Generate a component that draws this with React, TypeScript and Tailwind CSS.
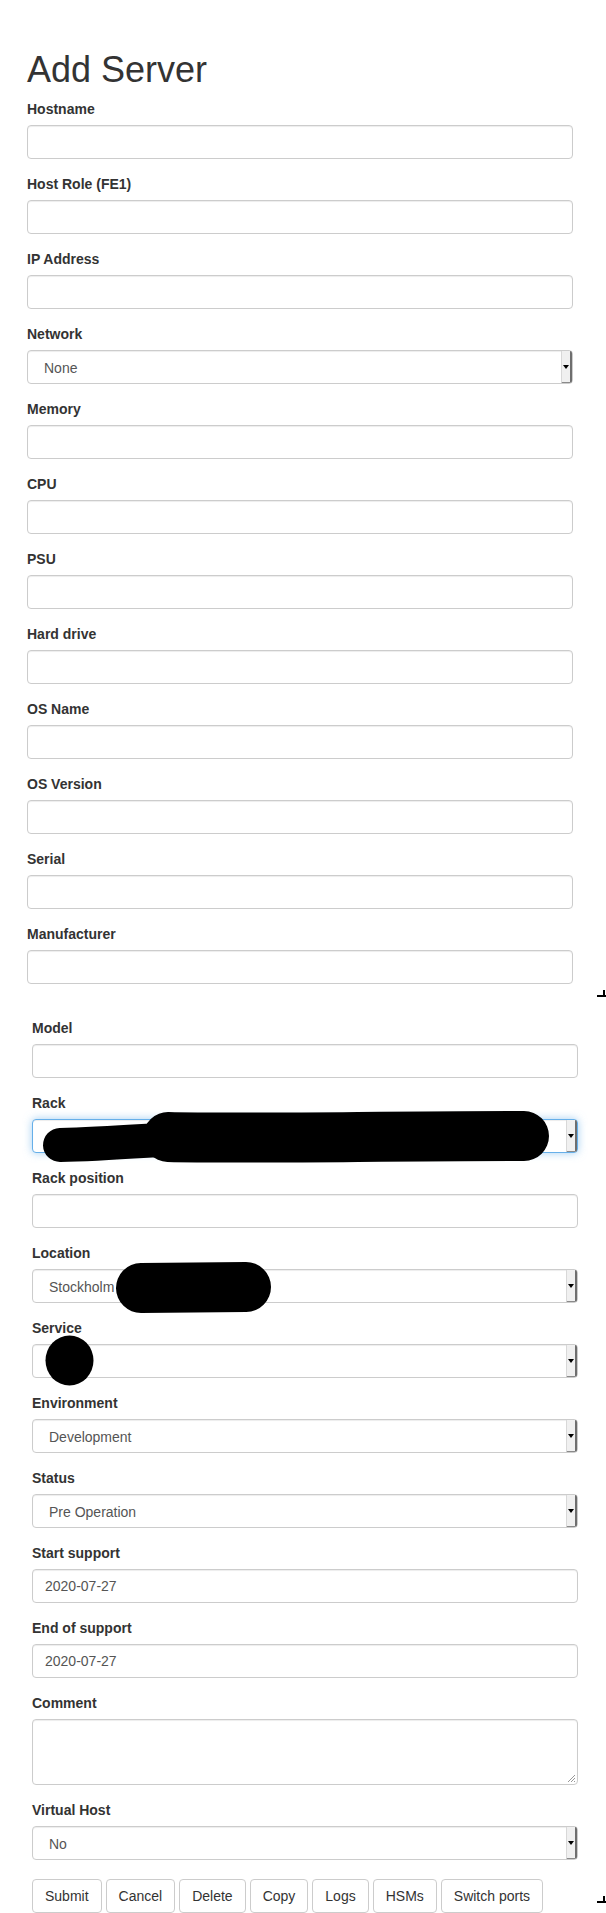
import React from "react";

const font = { fontFamily: '"Liberation Sans", Arial, sans-serif' };

function Label({ children }: { children: React.ReactNode }) {
  return (
    <label className="block text-[14px] leading-[21px] font-bold text-[#333] mb-[5px]">
      {children}
    </label>
  );
}

function TextInput({ value }: { value?: string }) {
  return (
    <div className="h-[34px] w-full rounded-[4px] border border-[#ccc] bg-white px-[12px] flex items-center text-[14px] text-[#555] shadow-[inset_0_1px_1px_rgba(0,0,0,0.075)]">
      {value}
    </div>
  );
}

function Select({ value, focus }: { value?: string; focus?: boolean }) {
  return (
    <div
      className={
        focus
          ? "h-[34px] w-full rounded-[4px] border border-[#66afe9] bg-white flex items-stretch text-[14px] text-[#555] shadow-[inset_0_1px_1px_rgba(0,0,0,0.075),0_0_8px_rgba(102,175,233,0.6)]"
          : "h-[34px] w-full rounded-[4px] border border-[#ccc] bg-white flex items-stretch text-[14px] text-[#555] shadow-[inset_0_1px_1px_rgba(0,0,0,0.075)]"
      }
    >
      <div className="flex-1 flex items-center pl-[16px] pt-[2px]">{value}</div>
      <div className="w-[11px] bg-[#f0f0f0] border-l border-[#d8d8d8] border-r-2 border-r-[#6e6e6e] border-b border-b-[#8a8a8a] flex items-center justify-center rounded-tr-[2px] rounded-br-[2px]">
        <div className="w-0 h-0 border-l-[3px] border-r-[3px] border-t-[4px] border-l-transparent border-r-transparent border-t-black" />
      </div>
    </div>
  );
}

function Group({ label, children }: { label: string; children: React.ReactNode }) {
  return (
    <div className="mb-[15px]">
      <Label>{label}</Label>
      {children}
    </div>
  );
}

function Btn({ children }: { children: React.ReactNode }) {
  return (
    <div className="h-[34px] px-[12px] rounded-[4px] border border-[#ccc] bg-white text-[14px] text-[#333] flex items-center">
      {children}
    </div>
  );
}

function Mark({ top }: { top: number }) {
  return (
    <div className="absolute left-[597px] w-[9px] h-[7px]" style={{ top }}>
      <div className="absolute right-[1px] top-0 w-[2px] h-[7px] bg-black" />
      <div className="absolute left-0 bottom-0 w-[9px] h-[2px] bg-black" />
    </div>
  );
}

export default function App() {
  return (
    <div className="relative w-[606px] h-[1913px] bg-white overflow-hidden" style={font}>
      <div className="ml-[27px] w-[546px] pt-[50px]">
        <h1 className="text-[36px] leading-[40px] text-[#333] font-normal mb-[9px]">Add Server</h1>
        <Group label="Hostname"><TextInput /></Group>
        <Group label="Host Role (FE1)"><TextInput /></Group>
        <Group label="IP Address"><TextInput /></Group>
        <Group label="Network"><Select value="None" /></Group>
        <Group label="Memory"><TextInput /></Group>
        <Group label="CPU"><TextInput /></Group>
        <Group label="PSU"><TextInput /></Group>
        <Group label="Hard drive"><TextInput /></Group>
        <Group label="OS Name"><TextInput /></Group>
        <Group label="OS Version"><TextInput /></Group>
        <Group label="Serial"><TextInput /></Group>
        <Group label="Manufacturer"><TextInput /></Group>
      </div>
      <div className="ml-[32px] w-[546px] pt-[19px]">
        <Group label="Model"><TextInput /></Group>
        <Group label="Rack"><Select focus /></Group>
        <Group label="Rack position"><TextInput /></Group>
        <Group label="Location"><Select value="Stockholm" /></Group>
        <Group label="Service"><Select /></Group>
        <Group label="Environment"><Select value="Development" /></Group>
        <Group label="Status"><Select value="Pre Operation" /></Group>
        <Group label="Start support"><TextInput value="2020-07-27" /></Group>
        <Group label="End of support"><TextInput value="2020-07-27" /></Group>
        <div className="mb-[15px]">
          <Label>Comment</Label>
          <div className="relative h-[66px] w-full rounded-[4px] border border-[#ccc] bg-white shadow-[inset_0_1px_1px_rgba(0,0,0,0.075)]">
            <svg className="absolute right-[1px] bottom-[1px]" width="9" height="9" viewBox="0 0 9 9">
              <line x1="8" y1="1" x2="1" y2="8" stroke="#999" strokeWidth="1" />
              <line x1="8" y1="4" x2="4" y2="8" stroke="#999" strokeWidth="1" />
              <line x1="8" y1="7" x2="7" y2="8" stroke="#999" strokeWidth="1" />
            </svg>
          </div>
        </div>
        <Group label="Virtual Host"><Select value="No" /></Group>
        <div className="flex gap-[4px] mt-[19px]">
          <Btn>Submit</Btn>
          <Btn>Cancel</Btn>
          <Btn>Delete</Btn>
          <Btn>Copy</Btn>
          <Btn>Logs</Btn>
          <Btn>HSMs</Btn>
          <Btn>Switch ports</Btn>
        </div>
      </div>

      <Mark top={990} />
      <Mark top={1896} />

      <svg className="absolute left-0 top-0 pointer-events-none" width="606" height="1913" viewBox="0 0 606 1913">
        <path d="M 60 1145 C 100 1144, 140 1141, 175 1139" stroke="black" strokeWidth="34" strokeLinecap="round" fill="none" />
        <path d="M 168 1137 C 250 1139, 380 1136, 524 1136" stroke="black" strokeWidth="50" strokeLinecap="round" fill="none" />
        <path d="M 141 1288 L 246 1287" stroke="black" strokeWidth="50" strokeLinecap="round" fill="none" />
        <ellipse cx="69.5" cy="1360.5" rx="24" ry="25" fill="black" />
      </svg>
    </div>
  );
}
